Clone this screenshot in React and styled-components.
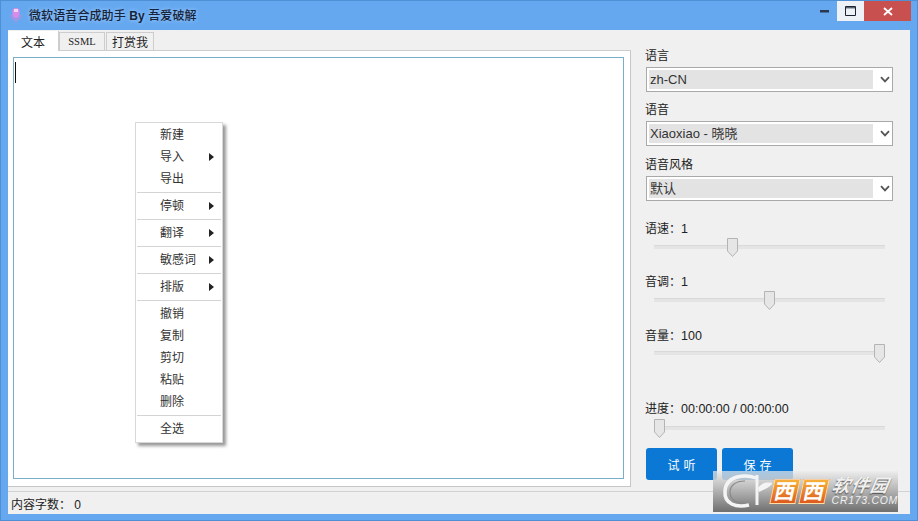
import React from "react";
import styled, { createGlobalStyle } from "styled-components";

const GlobalStyle = createGlobalStyle`
  html, body {
    margin: 0;
    padding: 0;
    width: 918px;
    height: 521px;
    overflow: hidden;
  }
  * { box-sizing: border-box; }
`;

const Window = styled.div`
  position: relative;
  width: 918px;
  height: 521px;
  display: flex;
  flex-direction: column;
  padding: 0 8px 7px;
  background: #65a8f0;
  border-top: 1px solid #4f8fd4;
  box-shadow: inset 1px 0 #4f8fd4, inset -1px 0 #4f8fd4, inset 0 -1px #4f8fd4;
  font-family: "Liberation Sans", "Noto Sans CJK SC", sans-serif;
  font-size: 12px;
  color: #222;
  overflow: hidden;
`;

const TitleBar = styled.div`
  height: 29px;
  flex: none;
  display: flex;
  align-items: flex-start;
`;

const AppIcon = styled.svg`
  width: 16px;
  height: 18px;
  margin: 5px 5px 0 0;
  flex: none;
`;

const Title = styled.div`
  margin-top: 7px;
  font-size: 12px;
  line-height: 16px;
  color: #16243a;
  font-weight: 500;
  text-shadow: 0 0 4px rgba(190, 220, 255, 0.8);
  letter-spacing: 0.1px;
  b { font-weight: 700; }
`;

const Controls = styled.div`
  margin-left: auto;
  display: flex;
  margin-right: -1px;
`;

const CtrlButton = styled.div`
  width: ${(p) => p.$w}px;
  height: 20px;
  display: flex;
  align-items: center;
  justify-content: center;
  background: ${(p) => p.$bg || "transparent"};
`;

const Client = styled.div`
  flex: 1;
  min-height: 0;
  display: flex;
  flex-direction: column;
  background: #f0f0f0;
`;

const Body = styled.div`
  flex: 1;
  min-height: 0;
  display: flex;
`;

const LeftColumn = styled.div`
  width: 623px;
  flex: none;
  display: flex;
  flex-direction: column;
  height: 457px;
`;

const TabStrip = styled.div`
  height: 21px;
  flex: none;
  display: flex;
  padding-top: 2px;
  border-bottom: 1px solid #cdcdcd;
`;

const Tab = styled.div`
  width: ${(p) => p.$w}px;
  margin-top: ${(p) => (p.$active ? "-1px" : "0")};
  height: ${(p) => (p.$active ? "20px" : "18px")};
  margin-left: ${(p) => p.$ml || 0}px;
  background: ${(p) => (p.$active ? "#fff" : "#f0f0f0")};
  border: 1px solid #cdcdcd;
  border-bottom: none;
  border-left: ${(p) => (p.$active ? "none" : "1px solid #cdcdcd")};
  border-top: ${(p) => (p.$active ? "none" : "1px solid #cdcdcd")};
  display: flex;
  align-items: center;
  justify-content: center;
  font-size: ${(p) => (p.$mono ? "10.5px" : "12px")};
  color: #222;
  font-family: ${(p) => (p.$mono ? '"Liberation Serif", serif' : "inherit")};
  z-index: ${(p) => (p.$active ? 1 : 0)};
`;

const Pane = styled.div`
  flex: 1;
  display: flex;
  padding: 6px 6px 7px 5px;
  background: #fff;
  border-right: 1px solid #c6c6c6;
  border-bottom: 1px solid #c6c6c6;
`;

const Editor = styled.div`
  flex: 1;
  border: 1px solid #78aec9;
  padding: 4px 0 0 1px;
`;

const Caret = styled.div`
  width: 1px;
  height: 21px;
  background: #111;
`;

const Side = styled.div`
  flex: 1;
  display: flex;
  flex-direction: column;
  padding: 18px 19px 0 14px;
`;

const FieldLabel = styled.div`
  font-size: 12px;
  line-height: 16px;
  color: #222;
  margin-top: ${(p) => p.$mt || 0}px;
`;

const Reading = styled.span`
  font-size: 12.5px;
`;

const SelectBox = styled.div`
  height: 25px;
  margin: 3px 0 0 1px;
  display: flex;
  align-items: center;
  border: 1px solid #a9a9a9;
  background: #fff;
  padding: 2px;
`;

const SelectValue = styled.div`
  width: 224px;
  height: 19px;
  background: #e3e3e3;
  font-size: 13px;
  line-height: 19px;
  padding-left: 1px;
  color: #333;
`;

const Chevron = styled.svg`
  width: 10px;
  height: 7px;
  margin-left: 7px;
`;

const SliderTrack = styled.div`
  position: relative;
  height: 4px;
  margin: ${(p) => p.$mt || 6}px 7px 0 9px;
  width: 231px;
  background: #e4e4e4;
  border-top: 1px solid #d9d9d9;
`;

const Thumb = styled.svg`
  position: absolute;
  top: -8px;
  width: 11px;
  height: 19px;
`;

const ButtonRow = styled.div`
  display: flex;
  gap: 5px;
  margin: 18px 0 0 1px;
`;

const ActionButton = styled.div`
  width: 71px;
  height: 32px;
  border-radius: 3px;
  background: #0a78d4;
  color: #fff;
  font-size: 12px;
  display: flex;
  align-items: center;
  justify-content: center;
  letter-spacing: 4px;
  padding-left: 4px;
`;

const StatusBar = styled.div`
  height: 23px;
  flex: none;
  border-top: 1px solid #d2d2d2;
  display: flex;
  align-items: center;
  padding: 0 0 0 3px;
  font-size: 12px;
  color: #222;
`;

const Menu = styled.div`
  position: absolute;
  left: 135px;
  top: 121px;
  width: 88px;
  padding: 1px 0 2px;
  background: #fff;
  border: 1px solid #d8d8d8;
  box-shadow: 3px 3px 3px rgba(70, 70, 70, 0.55);
`;

const MenuItem = styled.div`
  position: relative;
  height: 22px;
  line-height: 22px;
  padding-left: 24px;
  font-size: 12px;
  color: #333;
`;

const MenuArrow = styled.span`
  position: absolute;
  left: 73px;
  top: 7px;
  width: 0;
  height: 0;
  border-left: 5px solid #222;
  border-top: 4px solid transparent;
  border-bottom: 4px solid transparent;
`;

const MenuSep = styled.div`
  height: 5px;
  margin: 0 1px;
  padding-top: 2px;
  &::after {
    content: "";
    display: block;
    height: 1px;
    background: #d4d4d4;
  }
`;

const Watermark = styled.div`
  position: absolute;
  left: 713px;
  top: 470px;
  width: 185px;
  height: 41px;
  display: flex;
  align-items: center;
  background: linear-gradient(180deg, rgba(235, 235, 235, 0.7) 0%, #bdbdbd 40%, #6f6f6f 100%);
`;

const Logo = styled.svg`
  width: 54px;
  height: 41px;
  flex: none;
  margin-left: 5px;
`;

const OrangeTile = styled.div`
  width: 27px;
  height: 25px;
  margin-left: ${(p) => p.$ml || 0}px;
  background: linear-gradient(180deg, #f6b13a, #dd5a20);
  border: 1px solid rgba(255, 235, 190, 0.8);
  transform: skewX(-12deg);
  display: flex;
  align-items: center;
  justify-content: center;
  color: #fff;
  font-size: 21px;
  font-weight: 700;
  line-height: 24px;
`;

const BrandText = styled.div`
  margin-left: 4px;
  display: flex;
  flex-direction: column;
  color: #f0f0f0;
  font-style: italic;
`;

const BrandCn = styled.div`
  font-size: 18px;
  line-height: 18px;
  font-weight: 700;
  letter-spacing: 1px;
  transform: skewX(-10deg);
  text-shadow: 0 1px 1px #444;
`;

const BrandEn = styled.div`
  font-size: 10.5px;
  line-height: 11px;
  letter-spacing: 0.7px;
`;

const menuRows = [
  { label: "新建" },
  { label: "导入", sub: true },
  { label: "导出" },
  { sep: true },
  { label: "停顿", sub: true },
  { sep: true },
  { label: "翻译", sub: true },
  { sep: true },
  { label: "敏感词", sub: true },
  { sep: true },
  { label: "排版", sub: true },
  { sep: true },
  { label: "撤销" },
  { label: "复制" },
  { label: "剪切" },
  { label: "粘贴" },
  { label: "删除" },
  { sep: true },
  { label: "全选" },
];

const Select = ({ value }) => (
  <SelectBox>
    <SelectValue>{value}</SelectValue>
    <Chevron viewBox="0 0 10 7">
      <path d="M1 1.2 L5 5.4 L9 1.2" fill="none" stroke="#555" strokeWidth="1.8" />
    </Chevron>
  </SelectBox>
);

const Slider = ({ pos, mt }) => (
  <SliderTrack $mt={mt}>
    <Thumb viewBox="0 0 11 19" style={{ left: pos }}>
      <path d="M0.5 0.5 H10.5 V13 L5.5 18.5 L0.5 13 Z" fill="#e6e6e6" stroke="#b4b4b4" />
    </Thumb>
  </SliderTrack>
);

export default function App() {
  return (
    <Window>
      <GlobalStyle />
      <TitleBar>
        <AppIcon viewBox="0 0 16 18">
          <rect x="4.5" y="2" width="7" height="10" rx="3.2" fill="#d98be8" />
          <rect x="6" y="3" width="4" height="3" fill="#f4d4f6" />
          <path d="M3 9 C3 15 13 15 13 9 M8 14 V16.5" fill="none" stroke="#b58ee0" strokeWidth="1.3" />
        </AppIcon>
        <Title>
          微软语音合成助手 <b>By</b> 吾爱破解
        </Title>
        <Controls>
          <CtrlButton $w={26}>
            <svg width="9" height="3" viewBox="0 0 9 3">
              <rect width="9" height="2.5" fill="#2a3850" />
            </svg>
          </CtrlButton>
          <CtrlButton $w={27} $bg="#eef1f5">
            <svg width="11" height="10" viewBox="0 0 11 10">
              <path d="M0.5 0.5 H10.5 V9.5 H0.5 Z M0.5 1.8 H10.5" fill="none" stroke="#1a2433" strokeWidth="1" />
            </svg>
          </CtrlButton>
          <CtrlButton $w={47} $bg="#c8504f">
            <svg width="10" height="9" viewBox="0 0 10 9">
              <path d="M1 1 L9 8 M9 1 L1 8" stroke="#fff" strokeWidth="1.8" />
            </svg>
          </CtrlButton>
        </Controls>
      </TitleBar>

      <Client>
        <Body>
          <LeftColumn>
            <TabStrip>
              <Tab $w={51} $active>文本</Tab>
              <Tab $w={46} $mono>SSML</Tab>
              <Tab $w={48} $ml={1}>打赏我</Tab>
            </TabStrip>
            <Pane>
              <Editor>
                <Caret />
              </Editor>
            </Pane>
          </LeftColumn>

          <Side>
            <FieldLabel>语言</FieldLabel>
            <Select value="zh-CN" />
            <FieldLabel $mt={10}>语音</FieldLabel>
            <Select value="Xiaoxiao - 晓晓" />
            <FieldLabel $mt={11}>语音风格</FieldLabel>
            <Select value="默认" />

            <FieldLabel $mt={20}>语速：<Reading>1</Reading></FieldLabel>
            <Slider pos={73} mt={8} />
            <FieldLabel $mt={25}>音调：<Reading>1</Reading></FieldLabel>
            <Slider pos={110} mt={8} />
            <FieldLabel $mt={26}>音量：<Reading>100</Reading></FieldLabel>
            <Slider pos={220} mt={7} />
            <FieldLabel $mt={46}>进度：<Reading>00:00:00 / 00:00:00</Reading></FieldLabel>
            <Slider pos={0} mt={9} />

            <ButtonRow>
              <ActionButton>试听</ActionButton>
              <ActionButton>保存</ActionButton>
            </ButtonRow>
          </Side>
        </Body>
        <StatusBar>内容字数： 0</StatusBar>
      </Client>

      <Menu>
        {menuRows.map((row, i) =>
          row.sep ? (
            <MenuSep key={i} />
          ) : (
            <MenuItem key={i}>
              {row.label}
              {row.sub && <MenuArrow />}
            </MenuItem>
          )
        )}
      </Menu>

      <Watermark>
        <Logo viewBox="0 0 54 41">
          <path d="M38 7 C28 3 8 4 7 20 C6 33 18 37 31 34" fill="none" stroke="#f4f4f4" strokeWidth="3.5" />
          <path d="M27 10 C17 10 12 15 12 21 C12 28 17 32 27 32" fill="none" stroke="#8a8a8a" strokeWidth="1.2" />
          <path d="M39 4 V34" fill="none" stroke="#f4f4f4" strokeWidth="3" />
          <path d="M40 17 C44 11 50 11 55 12 C51 17 46 18 41 21 Z" fill="#f4f4f4" />
        </Logo>
        <OrangeTile>西</OrangeTile>
        <OrangeTile $ml={3}>西</OrangeTile>
        <BrandText>
          <BrandCn>软件园</BrandCn>
          <BrandEn>CR173.COM</BrandEn>
        </BrandText>
      </Watermark>
    </Window>
  );
}
